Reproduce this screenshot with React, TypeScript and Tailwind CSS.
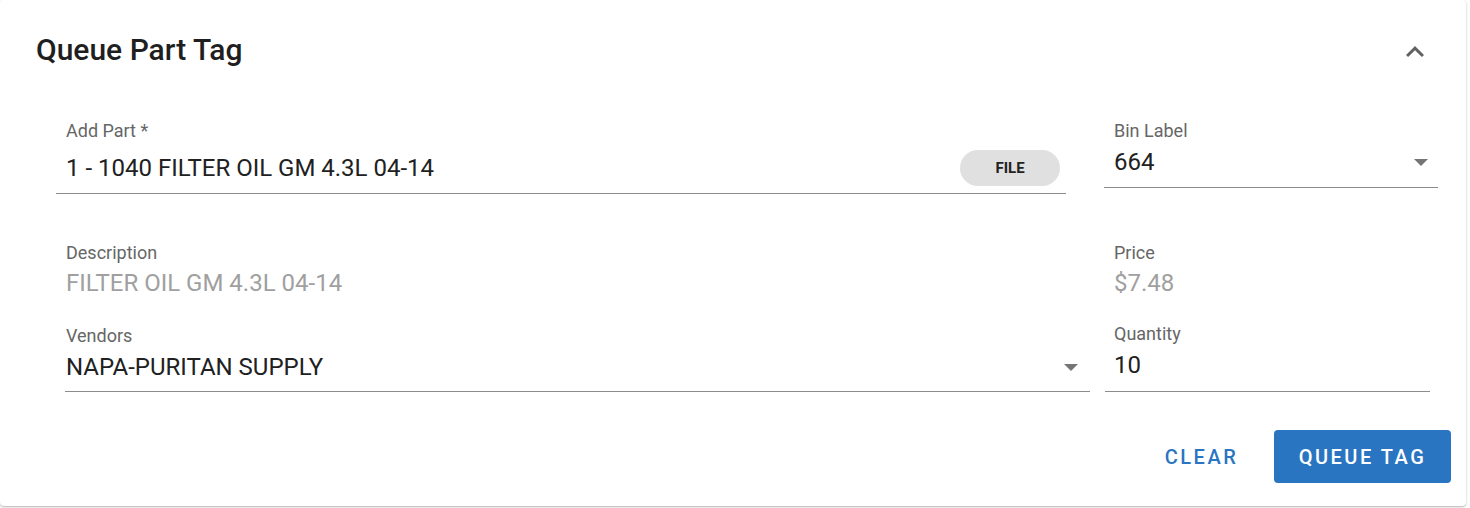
const Arrow = () => (
  <svg width="14" height="7" viewBox="0 0 14 7" className="shrink-0">
    <path d="M0 0 L7 7 L14 0 Z" fill="#757575" />
  </svg>
);

const QueuePartTag = () => {
  return (
    <div
      className="w-[1466px] h-[506px] bg-white rounded-[4px] shadow-[0_1px_3px_rgba(0,0,0,0.2),0_1px_1px_rgba(0,0,0,0.12)] flex flex-col"
      style={{ fontFamily: "Roboto, 'Liberation Sans', sans-serif" }}
    >
      {/* header */}
      <div className="flex justify-between items-start pt-[34px] pl-[36px] pr-[33px] h-[120px]">
        <h2 className="text-[30px] leading-[32px] font-medium text-[#1f1f1f]">Queue Part Tag</h2>
        <svg width="36" height="36" viewBox="0 0 24 24">
          <path d="M12 8l-6 6 1.41 1.41L12 10.83l4.59 4.58L18 14z" fill="#616161" />
        </svg>
      </div>

      {/* part + bin */}
      <div className="flex items-start">
        <div className="ml-[56px] w-[1010px] border-b border-[#8c8c8c] pb-[5px]">
          <div className="pl-[10px] text-[18px] leading-[22px] text-[#666]">Add Part *</div>
          <div className="mt-[6px] h-[40px] flex items-center justify-between pl-[10px] pr-[6px]">
            <span className="text-[24px] text-[#212121]">1 - 1040 FILTER OIL GM 4.3L 04-14</span>
            <button className="w-[100px] h-[36px] rounded-full bg-[#e0e0e0] text-[15px] font-bold text-[#222]">
              FILE
            </button>
          </div>
        </div>
        <div className="ml-[38px] w-[334px] border-b border-[#8c8c8c] pb-[5px]">
          <div className="pl-[10px] text-[18px] leading-[22px] text-[#666]">Bin Label</div>
          <div className="h-[40px] flex items-center justify-between pl-[10px] pr-[10px]">
            <span className="text-[24px] text-[#212121]">664</span>
            <Arrow />
          </div>
        </div>
      </div>

      {/* description + price */}
      <div className="flex items-start mt-[48px]">
        <div className="ml-[66px] w-[1048px]">
          <div className="text-[18px] leading-[22px] text-[#666]">Description</div>
          <div className="mt-[7px] text-[24px] leading-[24px] text-[#a0a0a0]">FILTER OIL GM 4.3L 04-14</div>
        </div>
        <div>
          <div className="text-[18px] leading-[22px] text-[#666]">Price</div>
          <div className="mt-[7px] text-[24px] leading-[24px] text-[#a0a0a0]">$7.48</div>
        </div>
      </div>

      {/* vendors + quantity */}
      <div className="flex items-start mt-[30px]">
        <div className="ml-[65px] w-[1025px] border-b border-[#8c8c8c] pb-[4px]">
          <div className="pl-[1px] text-[18px] leading-[22px] text-[#666]">Vendors</div>
          <div className="h-[40px] flex items-center justify-between pl-[1px] pr-[12px]">
            <span className="text-[24px] text-[#212121]">NAPA-PURITAN SUPPLY</span>
            <Arrow />
          </div>
        </div>
        <div className="ml-[15px] -mt-[2px] w-[325px] border-b border-[#8c8c8c] pb-[6px]">
          <div className="pl-[9px] text-[18px] leading-[22px] text-[#666]">Quantity</div>
          <div className="h-[40px] flex items-center pl-[9px]">
            <span className="text-[24px] text-[#212121]">10</span>
          </div>
        </div>
      </div>

      {/* actions */}
      <div className="flex justify-end items-center mt-[38px] pr-[15px]">
        <button className="w-[103px] h-[53px] mr-[21px] text-[20px] font-medium tracking-[2.5px] text-[#2a75c1]">
          CLEAR
        </button>
        <button className="w-[177px] h-[53px] rounded-[4px] bg-[#2a75c1] text-[20px] font-medium tracking-[2.5px] text-white">
          QUEUE TAG
        </button>
      </div>
    </div>
  );
};

export default function App() {
  return (
    <div className="w-[1470px] h-[508px] bg-white">
      <QueuePartTag />
    </div>
  );
}
